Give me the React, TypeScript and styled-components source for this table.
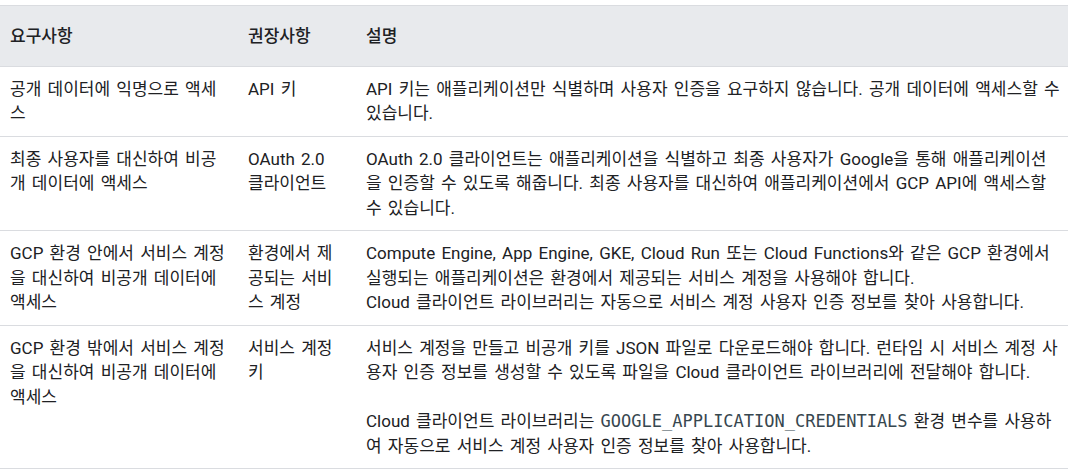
import React from "react";
import styled, { createGlobalStyle } from "styled-components";

const GlobalStyle = createGlobalStyle`
  body {
    margin: 0;
    background: #ffffff;
    color: #202124;
    font-family: Roboto, "Noto Sans CJK KR", sans-serif;
  }
`;

const Page = styled.div`
  padding: 5px 4px 0 0;
`;

const Table = styled.table`
  width: 1068px;
  border-collapse: collapse;
  border-top: 1px solid #dadce0;
  font-size: 17px;
  line-height: 24.5px;
  word-spacing: 2px;
  table-layout: fixed;
`;

const HeadCell = styled.th<{ $width?: number }>`
  box-sizing: border-box;
  background: #e8eaed;
  font-weight: 500;
  text-align: left;
  padding: 18px 10px 17px;
  width: ${(p) => (p.$width ? `${p.$width}px` : "auto")};
  border-bottom: 1px solid #dadce0;
`;

const Row = styled.tr`
  border-bottom: 1px solid #dadce0;
`;

const Cell = styled.td<{ $wide?: boolean }>`
  padding: 10px ${(p) => (p.$wide ? "7px" : "10px")} 10px 10px;
  vertical-align: top;
`;

const Para = styled.p`
  margin: 0 0 24.5px;

  &:last-child {
    margin-bottom: 0;
  }
`;

const Code = styled.code`
  font-family: "DejaVu Sans Mono", "Liberation Mono", monospace;
  font-size: 17px;
  word-spacing: 0;
  color: #37474f;
`;

type Item = {
  need: string;
  pick: string;
  desc: React.ReactNode;
};

const items: Item[] = [
  {
    need: "공개 데이터에 익명으로 액세스",
    pick: "API 키",
    desc: "API 키는 애플리케이션만 식별하며 사용자 인증을 요구하지 않습니다. 공개 데이터에 액세스할 수 있습니다.",
  },
  {
    need: "최종 사용자를 대신하여 비공개 데이터에 액세스",
    pick: "OAuth 2.0 클라이언트",
    desc: "OAuth 2.0 클라이언트는 애플리케이션을 식별하고 최종 사용자가 Google을 통해 애플리케이션을 인증할 수 있도록 해줍니다. 최종 사용자를 대신하여 애플리케이션에서 GCP API에 액세스할 수 있습니다.",
  },
  {
    need: "GCP 환경 안에서 서비스 계정을 대신하여 비공개 데이터에 액세스",
    pick: "환경에서 제공되는 서비스 계정",
    desc: (
      <>
        Compute Engine, App Engine, GKE, Cloud Run 또는 Cloud Functions와 같은 GCP 환경에서 실행되는
        애플리케이션은 환경에서 제공되는 서비스 계정을 사용해야 합니다.
        <br />
        Cloud 클라이언트 라이브러리는 자동으로 서비스 계정 사용자 인증 정보를 찾아 사용합니다.
      </>
    ),
  },
  {
    need: "GCP 환경 밖에서 서비스 계정을 대신하여 비공개 데이터에 액세스",
    pick: "서비스 계정 키",
    desc: (
      <>
        <Para>
          서비스 계정을 만들고 비공개 키를 JSON 파일로 다운로드해야 합니다. 런타임 시 서비스 계정
          사용자 인증 정보를 생성할 수 있도록 파일을 Cloud 클라이언트 라이브러리에 전달해야 합니다.
        </Para>
        <Para>
          Cloud 클라이언트 라이브러리는 <Code>GOOGLE_APPLICATION_CREDENTIALS</Code> 환경 변수를
          사용하여 자동으로 서비스 계정 사용자 인증 정보를 찾아 사용합니다.
        </Para>
      </>
    ),
  },
];

const App = () => (
  <Page>
    <GlobalStyle />
    <Table>
      <thead>
        <tr>
          <HeadCell $width={238}>요구사항</HeadCell>
          <HeadCell $width={118}>권장사항</HeadCell>
          <HeadCell>설명</HeadCell>
        </tr>
      </thead>
      <tbody>
        {items.map((item) => (
          <Row key={item.need}>
            <Cell>{item.need}</Cell>
            <Cell>{item.pick}</Cell>
            <Cell $wide>{item.desc}</Cell>
          </Row>
        ))}
      </tbody>
    </Table>
  </Page>
);

export default App;
